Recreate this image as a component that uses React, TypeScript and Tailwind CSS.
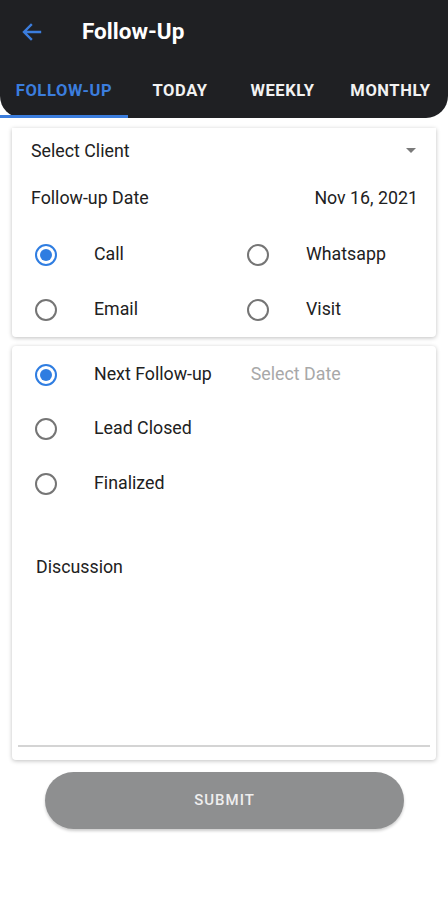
import { useState } from "react";

const tabs = [
  { label: "FOLLOW-UP", w: "w-[128px]" },
  { label: "TODAY", w: "w-[104px]" },
  { label: "WEEKLY", w: "w-[101px]" },
  { label: "MONTHLY", w: "w-[115px]" },
];

function Radio({ checked }: { checked: boolean }) {
  return (
    <span
      className={
        "flex h-[22px] w-[22px] shrink-0 items-center justify-center rounded-full border-2 " +
        (checked ? "border-[#2f7de1]" : "border-[#757575]")
      }
    >
      {checked && <span className="h-[12px] w-[12px] rounded-full bg-[#2f7de1]" />}
    </span>
  );
}

function Option({ label, checked }: { label: string; checked: boolean }) {
  return (
    <div className="flex h-[55px] items-center">
      <div className="flex w-[70px] justify-start pl-[23px]">
        <Radio checked={checked} />
      </div>
      <span className="pl-[12px] text-[17.8px] text-[#212121]">{label}</span>
    </div>
  );
}

export default function App() {
  const [activeTab] = useState(0);

  return (
    <div className="min-h-[900px] bg-white font-['Roboto',sans-serif]">
      {/* Header */}
      <div className="rounded-b-[22px] bg-[#1f2023]">
        <div className="flex h-[64px] items-center">
          <svg className="ml-[20px] h-[24px] w-[24px]" viewBox="0 0 24 24" fill="none" stroke="#3b7ddd" strokeWidth="2.4" strokeLinecap="square">
            <path d="M20 12H5M11 5l-7 7 7 7" />
          </svg>
          <h1 className="ml-[38px] text-[22.5px] font-bold text-white">Follow-Up</h1>
        </div>
        <div className="flex h-[54px]">
          {tabs.map((t, i) => (
            <div key={t.label} className={"flex shrink-0 flex-col items-center justify-between " + t.w}>
              <span
                className={
                  "mt-[15px] whitespace-nowrap text-[16.5px] font-bold tracking-[0.6px] " +
                  (i === activeTab ? "text-[#3b7ddd]" : "text-[#f2f2f2]")
                }
              >
                {t.label}
              </span>
              <span className={"h-[3px] w-full " + (i === activeTab ? "bg-[#3b7ddd]" : "bg-transparent")} />
            </div>
          ))}
        </div>
      </div>

      {/* Card 1 */}
      <div className="mx-[12px] mt-[10px] rounded-b-[4px] bg-white shadow-[0_1px_4px_rgba(0,0,0,0.25)]">
        <div className="flex h-[46px] items-center justify-between pl-[19px] pr-[20px]">
          <span className="text-[17.8px] text-[#212121]">Select Client</span>
          <svg width="10" height="6" viewBox="0 0 10 6">
            <path d="M0 0h10L5 5z" fill="#7a7a7a" />
          </svg>
        </div>
        <div className="flex h-[49px] items-center justify-between pl-[19px] pr-[18px]">
          <span className="text-[17.8px] text-[#212121]">Follow-up Date</span>
          <span className="text-[17.8px] text-[#212121]">Nov 16, 2021</span>
        </div>
        <div className="grid grid-cols-2 pt-[4px]">
          <Option label="Call" checked />
          <Option label="Whatsapp" checked={false} />
          <Option label="Email" checked={false} />
          <Option label="Visit" checked={false} />
        </div>
      </div>

      {/* Card 2 */}
      <div className="mx-[12px] mt-[9px] flex h-[414px] flex-col rounded-[4px] bg-white shadow-[0_1px_4px_rgba(0,0,0,0.25)]">
        <div className="flex h-[55px] items-center pt-[2px]">
          <Option label="Next Follow-up" checked />
          <span className="ml-[39px] text-[17.8px] text-[#a8a8a8]">Select Date</span>
        </div>
        <Option label="Lead Closed" checked={false} />
        <Option label="Finalized" checked={false} />
        <div className="mt-[43px] pl-[24px] text-[17.8px] text-[#212121]">Discussion</div>
        <div className="mx-[6px] mt-auto mb-[13px] h-[2px] bg-[#d4d4d4]" />
      </div>

      {/* Submit */}
      <div className="flex pl-[45px] pr-[44px] pt-[12px]">
        <button className="h-[57px] w-full rounded-full bg-[#8e8f90] text-[15px] font-medium tracking-[1px] text-[#eeeeee] shadow-[0_2px_3px_rgba(0,0,0,0.2)]">
          SUBMIT
        </button>
      </div>
    </div>
  );
}
